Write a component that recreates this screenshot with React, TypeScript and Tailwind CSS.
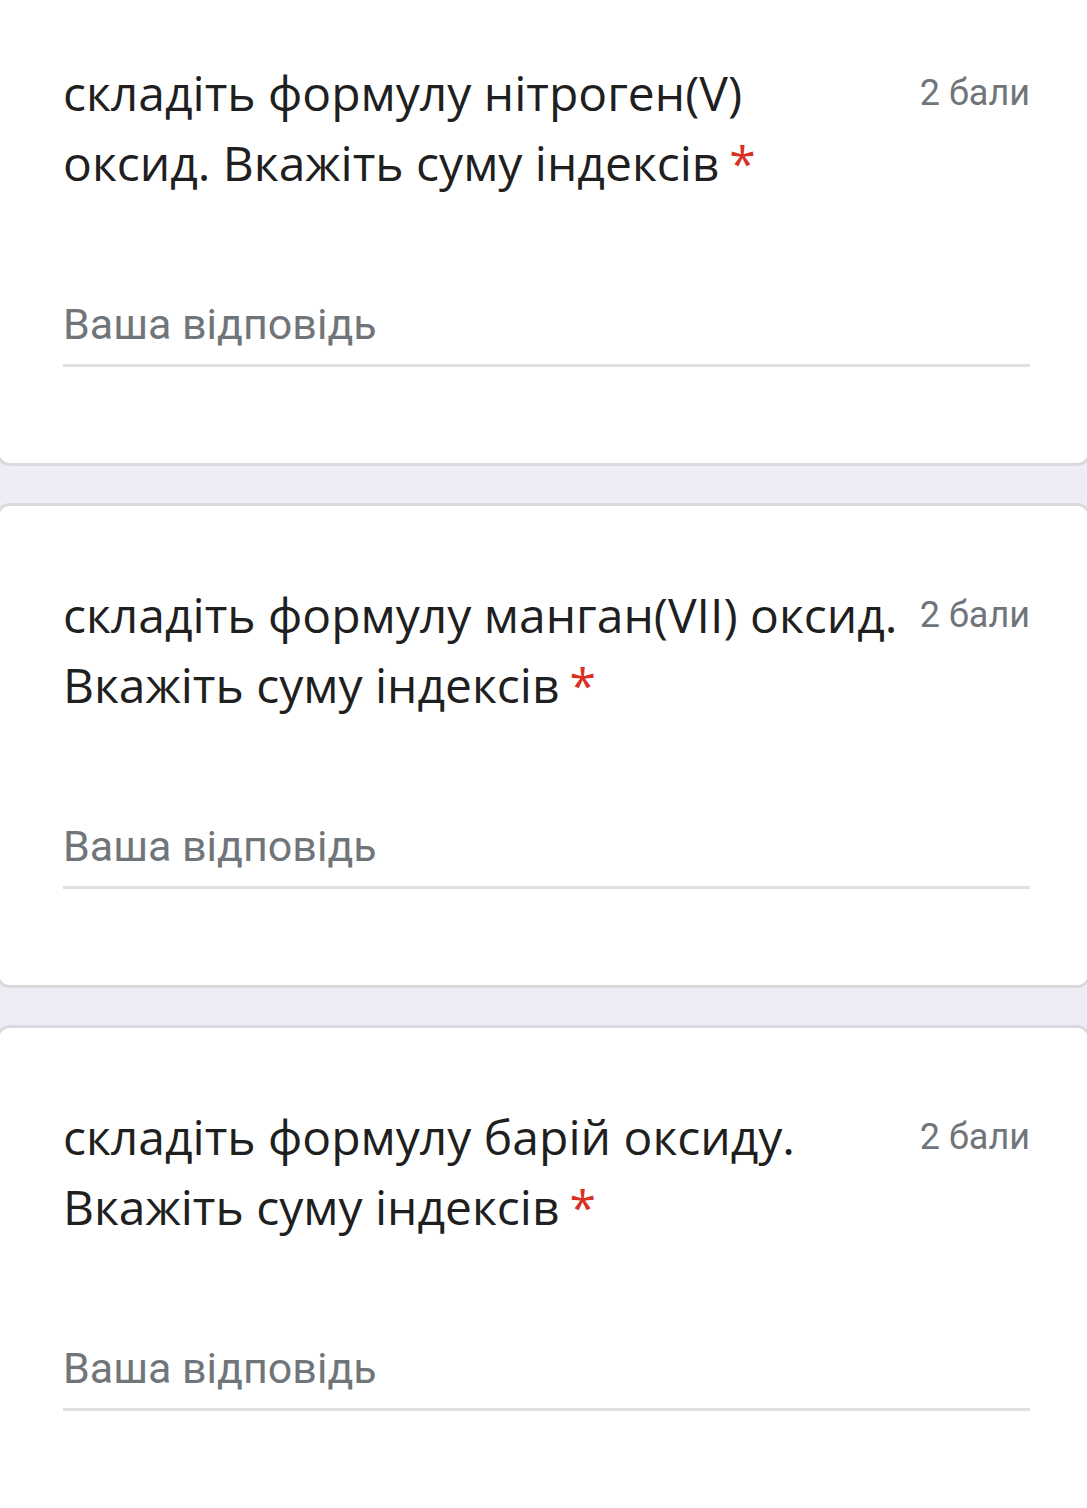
const questions = [
  { lines: ['складіть формулу нітроген(V)', 'оксид. Вкажіть суму індексів'], points: '2 бали' },
  { lines: ['складіть формулу манган(VII) оксид.', 'Вкажіть суму індексів'], points: '2 бали' },
  { lines: ['складіть формулу барій оксиду.', 'Вкажіть суму індексів'], points: '2 бали' },
];

const QuestionCard = ({ lines, points, last }: { lines: string[]; points: string; last?: boolean }) => {
  return (
    <section
      className={`w-[1095px] -ml-[4px] bg-white border-[3px] border-[#d9d9de] rounded-[14px] pl-[64px] pr-[58px] pt-[74px] ${
        last ? 'pb-[160px]' : 'pb-[96px]'
      }`}
    >
      <div className="flex items-start">
        <h2 className="flex-1 text-[48px] leading-[70px] text-[#1f1f1f] font-['Open_Sans',sans-serif] font-normal">
          {lines.map((line, i) => (
            <div key={i} className="whitespace-nowrap">
              {line}
              {i === lines.length - 1 && <span className="text-[#d93025] pl-[10px]">*</span>}
            </div>
          ))}
        </h2>
        <span className="shrink-0 text-[36px] leading-[70px] text-[#70757a] font-['Roboto',sans-serif]">
          {points}
        </span>
      </div>
      <div className="mt-[93px] pb-[7px] border-b-[3px] border-[#e0e0e0]">
        <div className="text-[43px] leading-[66px] text-[#70757a] font-['Roboto',sans-serif]">
          Ваша відповідь
        </div>
      </div>
    </section>
  );
};

const App = () => {
  return (
    <main className="h-[1508px] overflow-hidden bg-[#efecf6]">
      <div className="-mt-[19px] flex flex-col gap-[37px]">
        {questions.map((q, i) => (
          <QuestionCard key={i} lines={q.lines} points={q.points} last={i === questions.length - 1} />
        ))}
      </div>
    </main>
  );
};

export default App;
